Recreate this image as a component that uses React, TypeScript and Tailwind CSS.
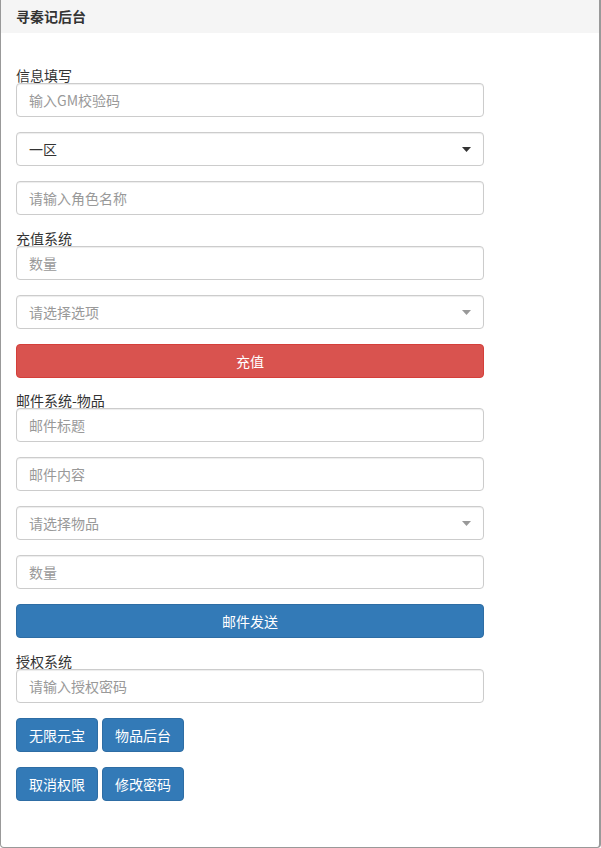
const font = "font-['Microsoft_YaHei','Noto_Sans_CJK_SC',sans-serif]"

function Field({ placeholder }: { placeholder: string }) {
  return (
    <input
      placeholder={placeholder}
      className="block h-[34px] w-full rounded-[4px] border border-[#ccc] bg-white px-3 text-[14px] text-[#555] shadow-[inset_0_1px_1px_rgba(0,0,0,0.075)] outline-none placeholder:text-[#999]"
    />
  )
}

function Select({ value, placeholder, dark }: { value?: string; placeholder?: string; dark?: boolean }) {
  return (
    <div className="flex h-[34px] w-full items-center justify-between rounded-[4px] border border-[#ccc] bg-white pl-3 pr-[12px] text-[14px] shadow-[inset_0_1px_1px_rgba(0,0,0,0.075)]">
      <span className={value ? "text-[#333]" : "text-[#999]"}>{value ?? placeholder}</span>
      <svg width="9" height="5" viewBox="0 0 9 5">
        <path d="M0 0h9L4.5 5z" fill={dark ? "#333" : "#999"} />
      </svg>
    </div>
  )
}

function Label({ children }: { children: React.ReactNode }) {
  return <div className="h-[16px] text-[14px] leading-[16px] text-[#333]">{children}</div>
}

function Btn({ children, color, full }: { children: React.ReactNode; color: "red" | "blue"; full?: boolean }) {
  return (
    <button
      className={
        "h-[34px] rounded-[4px] border text-[14px] text-white " +
        (full ? "block w-full " : "inline-block px-3 ") +
        (color === "red" ? "border-[#d43f3a] bg-[#d9534f]" : "border-[#2e6da4] bg-[#337ab7]")
      }
    >
      {children}
    </button>
  )
}

export default function App() {
  return (
    <div className={`${font} h-[848px] w-[601px] bg-white`}>
      <div className="flex h-full flex-col rounded-b-[4px] border-x border-b border-x-[#999] border-b-[#999] border-r-2">
        <div className="h-[33px] bg-[#f5f5f5] pl-[15px] text-[14px] font-bold leading-[32px] text-[#333]">寻秦记后台</div>
        <div className="w-[483px] pl-[15px] pt-[34px]">
          <Label>信息填写</Label>
          <div className="mb-[15px]"><Field placeholder="输入GM校验码" /></div>
          <div className="mb-[15px]"><Select value="一区" dark /></div>
          <div className="mb-[15px]"><Field placeholder="请输入角色名称" /></div>

          <Label>充值系统</Label>
          <div className="mb-[15px]"><Field placeholder="数量" /></div>
          <div className="mb-[15px]"><Select placeholder="请选择选项" /></div>
          <div className="mb-[14px]"><Btn color="red" full>充值</Btn></div>

          <Label>邮件系统-物品</Label>
          <div className="mb-[15px]"><Field placeholder="邮件标题" /></div>
          <div className="mb-[15px]"><Field placeholder="邮件内容" /></div>
          <div className="mb-[15px]"><Select placeholder="请选择物品" /></div>
          <div className="mb-[15px]"><Field placeholder="数量" /></div>
          <div className="mb-[15px]"><Btn color="blue" full>邮件发送</Btn></div>

          <Label>授权系统</Label>
          <div className="mb-[15px]"><Field placeholder="请输入授权密码" /></div>
          <div className="mb-[15px] flex gap-[4px]">
            <Btn color="blue">无限元宝</Btn>
            <Btn color="blue">物品后台</Btn>
          </div>
          <div className="flex gap-[4px]">
            <Btn color="blue">取消权限</Btn>
            <Btn color="blue">修改密码</Btn>
          </div>
        </div>
      </div>
    </div>
  )
}
